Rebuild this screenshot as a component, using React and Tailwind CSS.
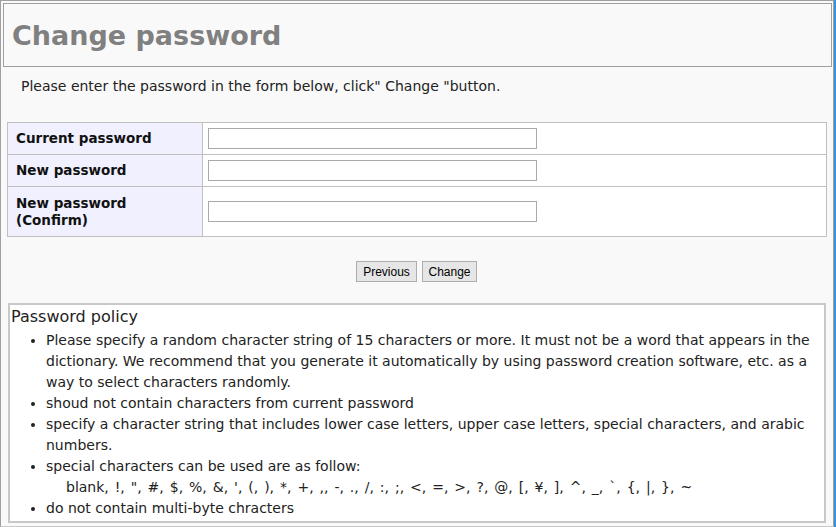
const specials = `blank, !, ", #, $, %, &, ', (, ), *, +, ,, -, ., /, :, ;, <, =, >, ?, @, [, ¥, ], ^, _, \`, {, |, }, ~`

function FieldRow({ label, tall }) {
  return (
    <tr className={tall ? 'h-[50px]' : 'h-[32px]'}>
      <th className="w-[195px] border border-[#c0c0c0] bg-[#f0f0ff] px-2 text-left align-middle text-[13.5px] font-bold leading-[17px] text-[#111]">
        {label}
      </th>
      <td className="border border-[#c0c0c0] bg-white px-[5px] align-middle">
        <input type="password" className="block h-[21px] w-[329px] border border-[#a9a9a9] bg-white" />
      </td>
    </tr>
  )
}

export default function App() {
  return (
    <div className="flex h-[527px] w-[836px] bg-[#f9f9f9] font-['DejaVu_Sans',sans-serif] text-[14px] text-[#222]">
      <div className="flex-1 border border-[#a0a0a0] border-b-[#c8c8c8] pl-[2px] pr-[1px] pt-[2px]">
        <div className="flex h-[64px] items-center border border-[#a0a0a0] px-[8px]">
          <h1 className="text-[27px] font-bold leading-none text-[#808080]">Change password</h1>
        </div>
        <p className="mt-[11px] pl-[18px] leading-[17px]">
          Please enter the password in the form below, click" Change "button.
        </p>
        <div className="pl-[4px] pr-[5px] pt-[27px]">
          <table className="w-full border-collapse border border-[#c0c0c0]">
            <tbody>
              <FieldRow label="Current password" />
              <FieldRow label="New password" />
              <FieldRow label={<>New password<br />(Confirm)</>} tall />
            </tbody>
          </table>
        </div>
        <div className="mt-[24px] flex justify-center gap-[5px] pr-[2px] font-['Liberation_Sans',sans-serif] text-[12px] text-black">
          <button className="h-[21px] w-[61px] border border-[#adadad] bg-[#e6e6e6] leading-none">Previous</button>
          <button className="h-[21px] w-[55px] border border-[#adadad] bg-[#e6e6e6] leading-none">Change</button>
        </div>
        <div className="ml-[5px] mr-[6px] mt-[21px] h-[220px] border-2 border-[#c8c8c8] bg-white pl-[1px] pt-[2px]">
          <div className="text-[16px] leading-[20px]">Password policy</div>
          <ul className="ml-[35px] mt-[3px] list-disc leading-[21px]">
            <li>
              Please specify a random character string of 15 characters or more. It must not be a word that appears in the
              dictionary. We recommend that you generate it automatically by using password creation software, etc. as a
              way to select characters randomly.
            </li>
            <li>shoud not contain characters from current password</li>
            <li>specify a character string that includes lower case letters, upper case letters, special characters, and arabic numbers.</li>
            <li>
              special characters can be used are as follow:
              <div className="pl-[20px] [word-spacing:1.5px]">{specials}</div>
            </li>
            <li>do not contain multi-byte chracters</li>
          </ul>
        </div>
      </div>
      <div className="w-[2px] bg-[#3d8fdc]" />
    </div>
  )
}
